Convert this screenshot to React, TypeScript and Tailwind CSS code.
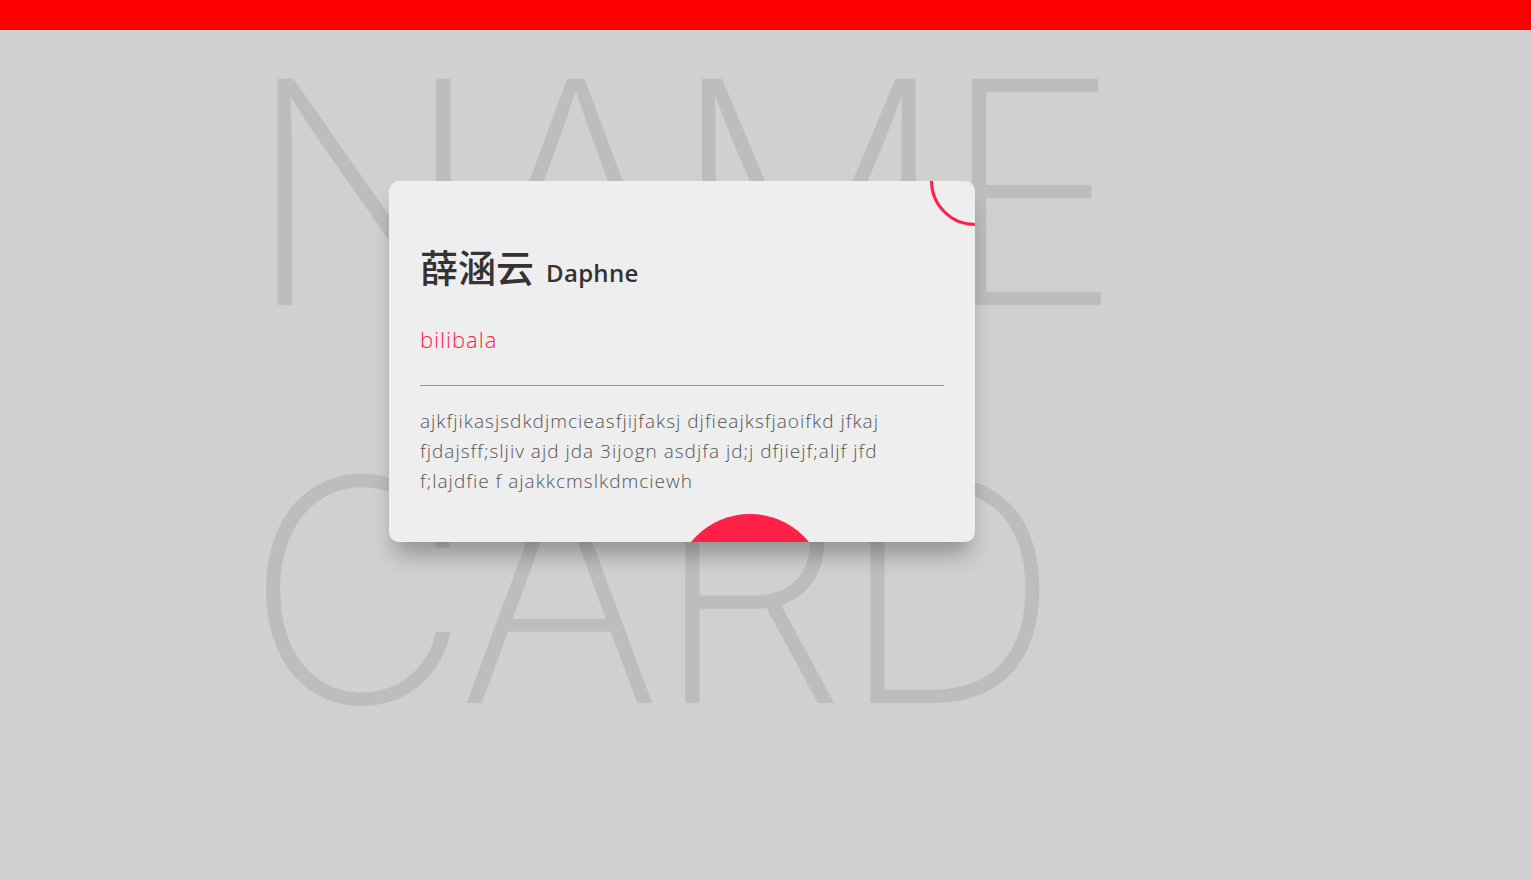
import React from "react";

const text = "ajkfjikasjsdkdjmcieasfjijfaksj djfieajksfjaoifkd jfkaj fjdajsff;sljiv ajd jda 3ijogn asdjfa jd;j dfjiejf;aljf jfd f;lajdfie f ajakkcmslkdmciewh";

function NameCard() {
  return (
    <div className="relative col-start-1 row-start-1 self-start ml-[389px] mt-[151px] w-[586px] h-[361px] overflow-hidden rounded-[10px] bg-[#eeeeee] px-[31px] pt-[66px] shadow-[0_18px_22px_-6px_rgba(0,0,0,0.3)] font-['Open_Sans','Noto_Sans_CJK_SC',sans-serif]">
      <div className="absolute -top-[45px] -right-[45px] h-[90px] w-[90px] rounded-full border-[3px] border-[#ff2147]" />
      <div className="absolute left-[285px] top-[333px] h-[152px] w-[152px] rounded-full bg-[#ff2147]" />
      <h2 className="flex items-baseline gap-[12px] leading-[40px] text-[#333333]">
        <span className="text-[38px] font-medium">薛涵云</span>
        <span className="text-[24px] font-semibold tracking-[0.3px]">Daphne</span>
      </h2>
      <p className="mt-[31px] text-[22px] font-light leading-[30px] tracking-[1px] text-[#ff2147]">bilibala</p>
      <hr className="mt-[31px] border-0 border-t border-[#999999]" />
      <p className="mt-[20px] text-[19px] font-light leading-[30px] tracking-[1px] text-[#555555]">{text}</p>
    </div>
  );
}

export default function App() {
  return (
    <div className="min-h-[880px] bg-[#d0d0d0]">
      <div className="h-[30px] bg-[#ff0000]" />
      <div className="grid">
        <div className="col-start-1 row-start-1 ml-[245px] -mt-[37px] font-['Inter',sans-serif] text-[311px] font-extralight leading-[398px] tracking-[-9px] text-[#bdbdbd] select-none">
          <div>NAME</div>
          <div>CARD</div>
        </div>
        <NameCard />
      </div>
    </div>
  );
}
